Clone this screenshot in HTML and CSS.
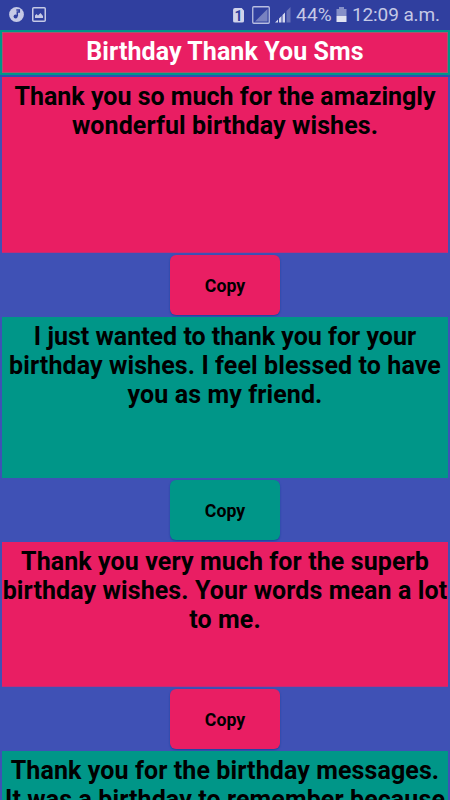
FILE: index.html
```html
<!DOCTYPE html>
<html lang="en">
<head>
<meta charset="utf-8">
<title>Birthday Thank You Sms</title>
<link rel="stylesheet" href="styles.css">
</head>
<body>
<div class="status">
  <div class="left">
    <svg width="15" height="15" viewBox="0 0 15 15"><circle cx="7.5" cy="7.5" r="7.4" fill="#c5c9e6"/><path d="M7.3 3h3v2H8.3v4.3" fill="none" stroke="#303f9f" stroke-width="1.5"/><circle cx="6.6" cy="9.5" r="2" fill="#303f9f"/></svg>
    <svg width="14" height="15" viewBox="0 0 14 15"><rect x=".75" y=".75" width="12.5" height="13.5" rx="1" fill="none" stroke="#c5c9e6" stroke-width="1.5"/><path d="M3 11V8.500l1.500-1.500L6 8.500 8.500 6l2.500 3v2z" fill="#c5c9e6"/></svg>
  </div>
  <div class="right">
    <div class="sim">1</div>
    <svg class="nosig" width="18" height="18" viewBox="0 0 18 18"><rect x=".75" y=".75" width="16.5" height="16.500" rx="1" fill="none" stroke="#b9bee1" stroke-width="1.3"/><path d="M3 15.500L15.500 3v12.500z" fill="#7882c0"/></svg>
    <svg class="signal" width="16" height="16" viewBox="0 0 16 16"><path d="M0 15.500L3 12.500v3zM4 11.500l2.500-2.500v6.500H4zM7.500 8L10 5.500v10H7.500z" fill="#d5d8ee"/><path d="M11.500 4L15.500 0v15.500h-4z" fill="#6671b8"/></svg>
    <span class="percent">44%</span>
    <svg class="battery" width="11" height="16" viewBox="0 0 11 16"><path d="M3 0h5v2h2.500v7H.5V2H3z" fill="#8690c8"/><path d="M.5 9h10v6H.5z" fill="#e0e3f2"/></svg>
    <span class="time">12:09 a.m.</span>
  </div>
</div>
<header class="bar"><h1>Birthday Thank You Sms</h1></header>
<main>
  <div class="card pink first"><span class="snug">Thank you so much for the amazingly</span><br>wonderful birthday wishes.</div>
  <button class="pink">Copy</button>
  <div class="card teal second"><span class="snug">I just wanted to thank you for your</span><br>birthday wishes. I feel blessed to have<br>you as my friend.</div>
  <button class="teal">Copy</button>
  <div class="card pink third">Thank you very much for the superb<br>birthday wishes. Your words mean a lot<br>to me.</div>
  <button class="pink">Copy</button>
  <div class="card teal fourth">Thank you for the birthday messages.<br>It was a birthday to remember because</div>
</main>
</body>
</html>
```
FILE: styles.css
```css
* { box-sizing: border-box; }
body { margin: 0; width: 450px; height: 800px; overflow: hidden; background: #3f51b5; font-family: Roboto, sans-serif; display: flex; flex-direction: column; }
.status { height: 30px; flex: none; background: #303f9f; color: #c5c9e6; display: flex; justify-content: space-between; padding: 0 10px 0 9px; }
.left, .right { display: flex; align-items: center; }
.left { gap: 8px; padding-bottom: 1px; }
.sim { width: 11px; height: 15px; background: #d0d3eb; color: #303f9f; font-size: 14px; font-weight: 700; line-height: 16px; text-align: center; border-radius: 2px; clip-path: polygon(0 0, 75% 0, 100% 22%, 100% 100%, 0 100%); }
.nosig { margin-left: 8px; }
.signal { margin-left: 5px; }
.percent, .time { font-size: 19px; line-height: 30px; white-space: nowrap; }
.percent { margin-left: 5px; letter-spacing: .2px; }
.battery { margin-left: 4px; }
.time { margin-left: 5px; letter-spacing: -.1px; }
.bar { height: 45px; flex: none; background: #009688; padding: 2px; }
h1 { margin: 0; height: 41px; border: 1px solid #a8586c; background: #e91e63; color: #fff; text-align: center; font-size: 25px; line-height: 37px; font-weight: 700; letter-spacing: .08px; }
main { display: flex; flex-direction: column; align-items: center; border-top: 2px solid #2c50b0; height: 725px; overflow: hidden; }
.card { width: 446px; flex: none; color: #000; text-align: center; font-size: 25px; font-weight: 700; line-height: 29px; letter-spacing: .1px; padding-top: 5px; white-space: nowrap; }
.snug { letter-spacing: 0; }
.pink { background: #e91e63; }
.teal { background: #009688; }
.card.pink { border-bottom: 1px solid #c02c78; }
.first { height: 176px; }
.second { height: 161px; }
.third { height: 145px; }
.fourth { height: 120px; }
button { width: 110px; height: 60px; flex: none; margin: 2px 0; border: 0; border-radius: 6px; padding: 1px 0 0; font: 700 17.7px Roboto, sans-serif; color: #000; box-shadow: 0 1px 2px #17459c; }
```
